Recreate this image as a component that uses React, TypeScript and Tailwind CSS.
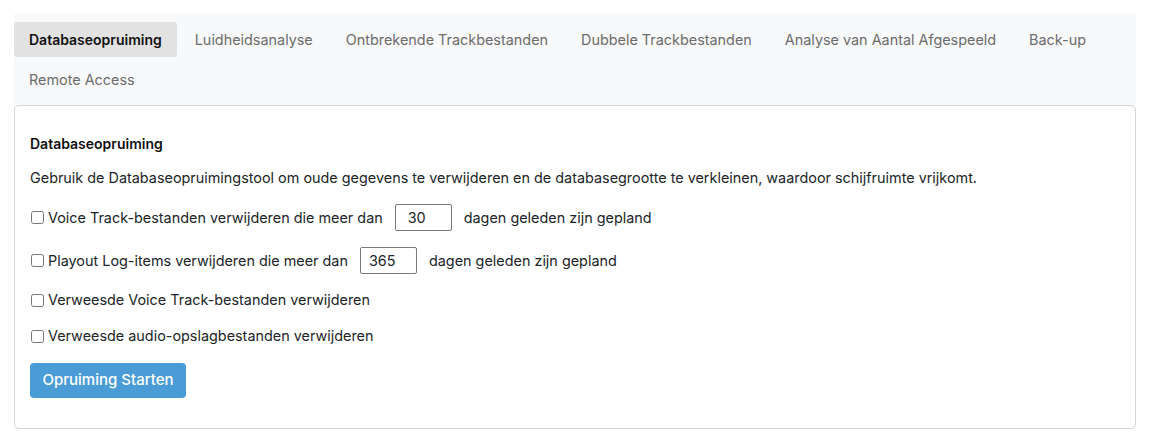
import React from "react";

const tabs = [
  "Databaseopruiming",
  "Luidheidsanalyse",
  "Ontbrekende Trackbestanden",
  "Dubbele Trackbestanden",
  "Analyse van Aantal Afgespeeld",
  "Back-up",
  "Remote Access",
];

function Check({ children }: { children: React.ReactNode }) {
  return (
    <label className="flex items-center h-[20px]">
      <input type="checkbox" className="m-0 ml-px mr-[4px] w-[13px] h-[13px]" />
      {children}
    </label>
  );
}

export default function App() {
  return (
    <div
      className="w-[1150px] h-[445px] bg-white pt-[14px] pl-[14px] text-[#212529] text-[14.4px]"
      style={{ fontFamily: "Inter, 'Noto Sans', sans-serif" }}
    >
      <div className="w-[1122px] bg-[#f8f9fa]">
        <div className="flex flex-wrap gap-x-[3px] gap-y-[5px] py-[8px]">
          {tabs.map((t, i) => (
            <div
              key={t}
              className={
                "h-[35px] px-[15px] flex items-center rounded-[3px] " +
                (i === 0 ? "bg-[#e2e2e2] font-semibold text-[14px] text-[#111]" : "text-[#6c6c6c]")
              }
            >
              {t}
            </div>
          ))}
        </div>
        <div className="bg-white border border-[#d6d6d6] rounded-[5px] px-[15px] pt-[28px] pb-[30px] h-[324px]">
          <div className="font-semibold text-[14px] leading-[20px] text-[#111]">Databaseopruiming</div>
          <div className="leading-[20px] mt-[14px]">
            Gebruik de Databaseopruimingstool om oude gegevens te verwijderen en de databasegrootte te verkleinen, waardoor schijfruimte vrijkomt.
          </div>
          <div className="mt-[16px] flex items-center h-[27px]">
            <Check>Voice Track-bestanden verwijderen die meer dan</Check>
            <input
              defaultValue="30"
              className="ml-[12px] mr-[12px] w-[57px] h-[27px] border border-[#7a7a7a] rounded-[2px] px-[12px] text-[14.4px]"
            />
            <span>dagen geleden zijn gepland</span>
          </div>
          <div className="mt-[16px] flex items-center h-[27px]">
            <Check>Playout Log-items verwijderen die meer dan</Check>
            <input
              defaultValue="365"
              className="ml-[12px] mr-[12px] w-[57px] h-[27px] border border-[#7a7a7a] rounded-[2px] px-[8px] text-[14.4px]"
            />
            <span>dagen geleden zijn gepland</span>
          </div>
          <div className="mt-[16px]">
            <Check>Verweesde Voice Track-bestanden verwijderen</Check>
          </div>
          <div className="mt-[16px]">
            <Check>Verweesde audio-opslagbestanden verwijderen</Check>
          </div>
          <button className="mt-[17px] h-[35px] w-[156px] bg-[#4a9cd6] text-white text-[15px] font-medium rounded-[4px]">
            Opruiming Starten
          </button>
        </div>
      </div>
    </div>
  );
}
